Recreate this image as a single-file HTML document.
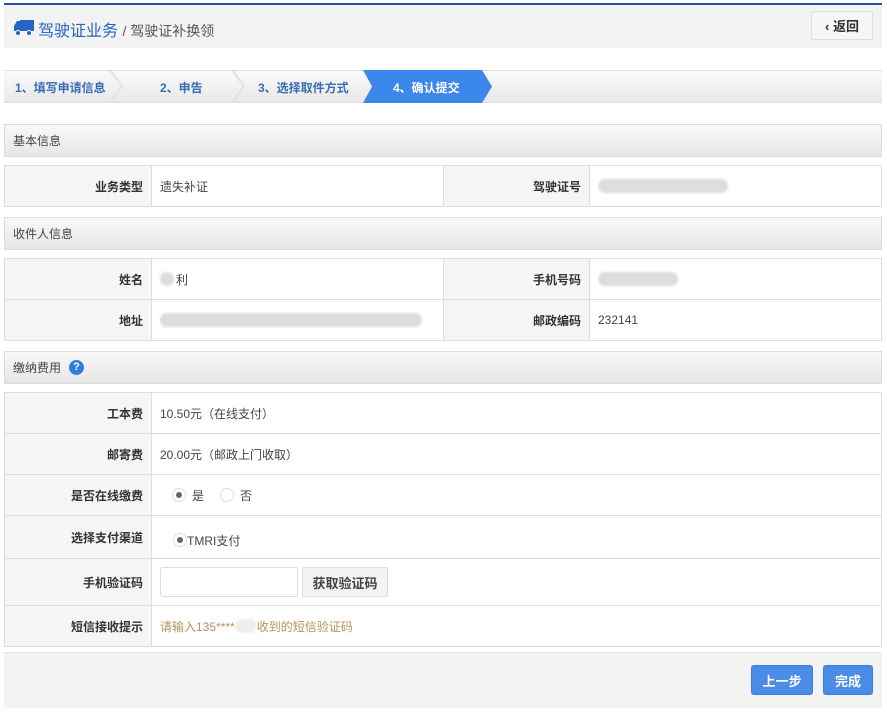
<!DOCTYPE html>
<html><head><meta charset="utf-8"><style>
*{margin:0;padding:0;box-sizing:border-box}
body{width:887px;height:712px;background:#fff;font-family:"Liberation Sans","Noto Sans CJK SC",sans-serif;font-size:12px;color:#333;position:relative;overflow:hidden}
.a{position:absolute}
.hd{left:4px;width:878px;height:33px;background:linear-gradient(#f9f9f9,#e6e6e6);border:1px solid #dcdcdc;padding:0 8px;color:#444;display:flex;align-items:center}
.row{left:4px;width:878px;border:1px solid #ddd;border-top:none}
.lab{background:#f5f5f5;font-weight:bold;text-align:right;padding-right:8px;position:absolute;top:0;bottom:0;display:flex;align-items:center;justify-content:flex-end;color:#333}
.val{position:absolute;top:0;bottom:0;display:flex;align-items:center;padding-left:8px;color:#444;border-left:1px solid #ddd}
.blur{background:#ddd;border-radius:8px;height:14px;filter:blur(1px)}
.rad{display:inline-block;width:14px;height:14px;border:1px solid #ddd;border-radius:50%;position:relative;margin-right:6px}
.rad.on::after{content:"";position:absolute;left:3px;top:3px;width:6px;height:6px;border-radius:50%;background:#666}
.btn{background:#4a8ce8;color:#fff;border:1px solid #3a7ad8;border-radius:3px;font-weight:bold;display:flex;align-items:center;justify-content:center;font-size:13px}
</style></head><body>
<div class="a" style="left:4px;top:3px;width:878px;height:2px;background:#1c55a8"></div>
<div class="a" style="left:4px;top:5px;width:878px;height:43px;background:#f3f3f3"></div>
<svg class="a" style="left:13px;top:19px" width="22" height="17" viewBox="0 0 22 17"><path d="M7 1h14v11H7z M1 7l3-5h3v10H1z" fill="#2563c9"/><circle cx="5" cy="14" r="2.5" fill="#2563c9" stroke="#fff" stroke-width="1"/><circle cx="16" cy="14" r="2.5" fill="#2563c9" stroke="#fff" stroke-width="1"/></svg>
<div class="a" style="left:38px;top:17px;font-size:16px;color:#2563c9">驾驶证业务 <span style="font-size:14px;color:#555">/ 驾驶证补换领</span></div>
<div class="a" style="left:811px;top:11px;width:62px;height:29px;border:1px solid #ddd;border-radius:2px;background:#f6f6f6;font-weight:bold;display:flex;align-items:center;justify-content:center;font-size:13px">‹ 返回</div>

<div class="a" style="left:4px;top:70px;width:878px;height:33px;background:linear-gradient(#fafafa,#e8e8e8);border-top:1px solid #ddd;border-bottom:1px solid #ddd"></div>
<svg class="a" style="left:0;top:70px" width="887" height="33"><path d="M110 0l12 16-12 17M232 0l12 16-12 17" stroke="#e2e2e2" fill="none" stroke-width="2"/><polygon points="363,0 482,0 492,16.5 482,33 363,33 372,16.5" fill="#3c87ea"/></svg>
<div class="a" style="left:15px;top:79px;font-weight:bold;color:#3a6db5;font-size:12px">1、填写申请信息</div>
<div class="a" style="left:160px;top:79px;font-weight:bold;color:#3a6db5">2、申告</div>
<div class="a" style="left:258px;top:79px;font-weight:bold;color:#3a6db5">3、选择取件方式</div>
<div class="a" style="left:393px;top:79px;font-weight:bold;color:#fff">4、确认提交</div>

<div class="a hd" style="top:124px">基本信息</div>
<div class="a row" style="top:165px;height:42px;border-top:1px solid #ddd">
<div class="lab" style="left:0;width:146px">业务类型</div><div class="val" style="left:146px">遗失补证</div>
<div class="lab" style="left:438px;width:146px;border-left:1px solid #ddd">驾驶证号</div><div class="val" style="left:584px;width:292px"><div class="blur" style="width:130px"></div></div></div>

<div class="a hd" style="top:217px">收件人信息</div>
<div class="a row" style="top:258px;height:42px;border-top:1px solid #ddd">
<div class="lab" style="left:0;width:146px">姓名</div><div class="val" style="left:146px"><div class="blur" style="width:14px;margin-right:2px"></div>利</div>
<div class="lab" style="left:438px;width:146px;border-left:1px solid #ddd">手机号码</div><div class="val" style="left:584px;width:292px"><div class="blur" style="width:80px"></div></div></div>
<div class="a row" style="top:300px;height:41px">
<div class="lab" style="left:0;width:146px">地址</div><div class="val" style="left:146px"><div class="blur" style="width:262px"></div></div>
<div class="lab" style="left:438px;width:146px;border-left:1px solid #ddd">邮政编码</div><div class="val" style="left:584px;width:292px">232141</div></div>

<div class="a hd" style="top:351px">缴纳费用 <span style="display:inline-block;width:15px;height:15px;border-radius:50%;background:#2e7ee0;color:#fff;font-weight:bold;text-align:center;line-height:15px;font-size:11px;margin-left:8px">?</span></div>
<div class="a row" style="top:392px;height:42px;border-top:1px solid #ddd"><div class="lab" style="left:0;width:146px">工本费</div><div class="val" style="left:146px">10.50元（在线支付）</div></div>
<div class="a row" style="top:434px;height:41px"><div class="lab" style="left:0;width:146px">邮寄费</div><div class="val" style="left:146px">20.00元（邮政上门收取）</div></div>
<div class="a row" style="top:475px;height:41px"><div class="lab" style="left:0;width:146px">是否在线缴费</div><div class="val" style="left:146px;padding-left:20px"><span class="rad on"></span>是<span class="rad" style="margin-left:16px"></span>否</div></div>
<div class="a row" style="top:516px;height:43px"><div class="lab" style="left:0;width:146px">选择支付渠道</div><div class="val" style="left:146px;padding-left:21px;padding-top:6px"><span class="rad on" style="margin-right:0"></span>TMRI支付</div></div>
<div class="a row" style="top:559px;height:47px"><div class="lab" style="left:0;width:146px">手机验证码</div><div class="val" style="left:146px"><div style="width:138px;height:30px;border:1px solid #ddd;border-radius:3px"></div><div style="margin-left:4px;width:86px;height:30px;border:1px solid #ddd;border-radius:2px;background:#f3f3f3;font-weight:bold;display:flex;align-items:center;justify-content:center;font-size:13px">获取验证码</div></div></div>
<div class="a row" style="top:606px;height:41px"><div class="lab" style="left:0;width:146px">短信接收提示</div><div class="val" style="left:146px;color:#b8925a">请输入135****<span class="blur" style="width:22px;display:inline-block;background:#eee"></span>收到的短信验证码</div></div>

<div class="a" style="left:4px;top:652px;width:878px;height:56px;background:#f3f3f3;border-top:1px solid #e2e2e2"></div>
<div class="a btn" style="left:751px;top:665px;width:62px;height:30px">上一步</div>
<div class="a btn" style="left:823px;top:665px;width:50px;height:30px">完成</div>
</body></html>
